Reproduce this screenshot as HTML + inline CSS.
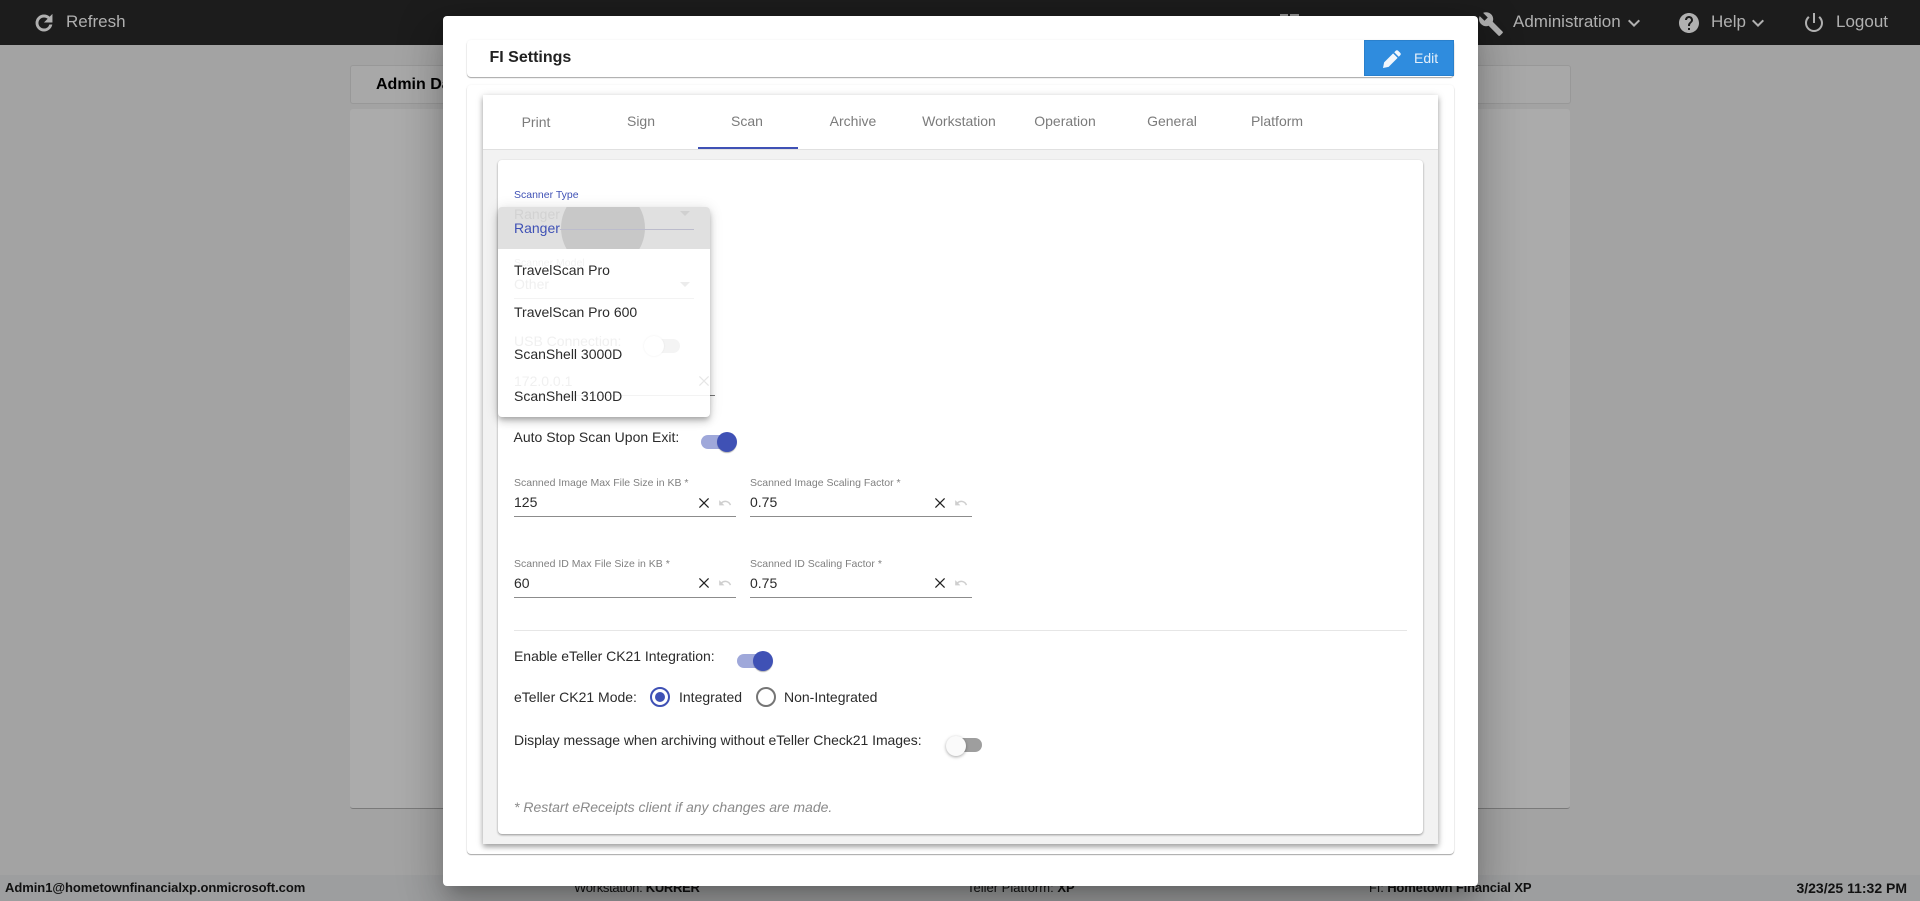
<!DOCTYPE html>
<html lang="en"><head><meta charset="utf-8"><title>FI Settings</title>
<style>
html,body{margin:0;padding:0;width:1920px;height:901px;overflow:hidden;background:#a3a3a3;font-family:"Liberation Sans",Arial,sans-serif}
div,span,svg{position:absolute}
.t{white-space:nowrap;line-height:20px;height:20px}
.nav{color:#b0b0b0;font-size:17px}
.tab{color:#7b7b7b;font-size:14px;width:106px;text-align:center}
.lab{color:#808080;font-size:10.5px}
.val{color:#2b2b2b;font-size:14px}
.it{color:#2b2b2b;font-size:14px}
.fa{color:#ececec;font-size:14px}
.ft{color:#111;font-size:13px}
b{font-weight:700}
.ul{height:1px;background:#8c8c8c}
.x{stroke:#222;stroke-width:1.25;fill:none}
</style></head><body>
<!-- header -->
<div style="left:0;top:0;width:1920px;height:45px;background:#1c1c1c"></div>
<svg style="left:32px;top:11px" width="24" height="24" viewBox="0 0 24 24" fill="#b0b0b0" stroke="#b0b0b0" stroke-width=".9"><path d="M17.65 6.35C16.2 4.9 14.21 4 12 4c-4.42 0-7.99 3.58-7.99 8s3.57 8 7.99 8c3.73 0 6.84-2.55 7.73-6h-2.08c-.82 2.33-3.04 4-5.65 4-3.31 0-6-2.69-6-6s2.69-6 6-6c1.66 0 3.14.69 4.22 1.78L13 11h7V4l-2.35 2.35z"/></svg>
<div class="t nav" style="left:66px;top:12px">Refresh</div>
<div style="left:1280px;top:14px;width:8px;height:3px;background:#8f8f8f"></div>
<div style="left:1290px;top:14px;width:9px;height:3px;background:#8f8f8f"></div>
<svg style="left:1478px;top:11px" width="26" height="26" viewBox="0 0 24 24" fill="#b0b0b0"><path d="M22.7 19l-9.1-9.1c.9-2.3.4-5-1.5-6.9-2-2-5-2.4-7.4-1.3L9 6 6 9 1.6 4.7C.4 7.1.9 10.1 2.9 12.1c1.9 1.9 4.6 2.4 6.9 1.5l9.1 9.1c.4.4 1 .4 1.4 0l2.3-2.3c.5-.4.5-1.1.1-1.4z"/></svg>
<div class="t nav" style="left:1513px;top:12px">Administration</div>
<svg style="left:1622px;top:11px" width="24" height="24" viewBox="0 0 24 24" fill="#b0b0b0"><path d="M7.41 8.59L12 13.17l4.59-4.58L18 10l-6 6-6-6z"/></svg>
<svg style="left:1677px;top:11px" width="24" height="24" viewBox="0 0 24 24" fill="#b0b0b0"><path d="M12 2C6.48 2 2 6.48 2 12s4.48 10 10 10 10-4.48 10-10S17.52 2 12 2zm1 17h-2v-2h2v2zm2.07-7.75l-.9.92C13.45 12.9 13 13.5 13 15h-2v-.5c0-1.1.45-2.1 1.17-2.83l1.24-1.26c.37-.36.59-.86.59-1.41 0-1.1-.9-2-2-2s-2 .9-2 2H8c0-2.21 1.79-4 4-4s4 1.79 4 4c0 .88-.36 1.68-.93 2.25z"/></svg>
<div class="t nav" style="left:1711px;top:12px">Help</div>
<svg style="left:1746px;top:11px" width="24" height="24" viewBox="0 0 24 24" fill="#b0b0b0"><path d="M7.41 8.59L12 13.17l4.59-4.58L18 10l-6 6-6-6z"/></svg>
<svg style="left:1802px;top:11px" width="24" height="24" viewBox="0 0 24 24" fill="#b0b0b0"><path d="M13 2h-2v10h2V2zm4.83 3.17l-1.42 1.42C17.99 7.86 19 9.81 19 12c0 3.87-3.13 7-7 7s-7-3.13-7-7c0-2.19 1.01-4.14 2.58-5.42L6.17 5.17C4.23 6.82 3 9.26 3 12c0 4.97 4.03 9 9 9s9-4.03 9-9c0-2.74-1.23-5.18-3.17-6.83z"/></svg>
<div class="t nav" style="left:1836px;top:12px">Logout</div>

<!-- background page -->
<div style="left:350px;top:65px;width:1219px;height:37px;background:#a8a8a8;border:1px solid #989898;border-radius:3px"></div>
<div class="t" style="left:376px;top:75px;font-size:16px;font-weight:700;color:#000">Admin Dashboard</div>
<div style="left:350px;top:109px;width:1220px;height:699px;background:#ababab;border-bottom:1px solid #7a7a7a;border-radius:3px"></div>

<!-- footer -->
<div style="left:0;top:875px;width:1920px;height:26px;background:#9d9e9f"></div>
<div class="t ft" style="left:5px;top:878px;font-weight:700;letter-spacing:-.05px">Admin1@hometownfinancialxp.onmicrosoft.com</div>
<div class="t ft" style="left:574px;top:878px;letter-spacing:-.3px">Workstation: <b>KURRER</b></div>
<div class="t ft" style="left:967px;top:878px">Teller Platform: <b>XP</b></div>
<div class="t ft" style="left:1369px;top:878px;letter-spacing:-.15px">FI: <b>Hometown Financial XP</b></div>
<div class="t ft" style="right:13px;top:878px;font-size:14px;font-weight:700">3/23/25 11:32 PM</div>

<!-- modal -->
<div style="left:443px;top:16px;width:1035px;height:870px;background:#fff;border-radius:4px;box-shadow:0 11px 15px -7px rgba(0,0,0,.2),0 24px 38px 3px rgba(0,0,0,.14),0 9px 46px 8px rgba(0,0,0,.12)"></div>

<div style="left:467px;top:40px;width:987px;height:37px;background:#fff;border-radius:4px;box-shadow:0 1px 1px rgba(0,0,0,.35),0 0 2px rgba(0,0,0,.06)"></div>
<div class="t" style="left:489.5px;top:48px;font-size:16px;font-weight:700;color:#222">FI Settings</div>
<div style="left:1364px;top:40px;width:90px;height:36px;background:#2f8cde;box-sizing:border-box;border:1px solid #2a80cc"></div>
<svg style="left:1383px;top:50px" width="18" height="18" viewBox="0 0 24 24" fill="#f2f7fc"><path d="M0 24L1.5 16.5 13.5 4.5 19.5 10.5 7.5 22.5zM15 3l2-2c1-1 2.2-1 3.2 0l2.8 2.8c1 1 1 2.2 0 3.2l-2 2z"/></svg>
<div class="t" style="left:1414px;top:48px;font-size:14px;color:#e4eff9">Edit</div>

<div style="left:467px;top:85px;width:987px;height:769px;background:#fff;border-radius:4px;box-shadow:0 1px 1px rgba(0,0,0,.35),0 0 2px rgba(0,0,0,.06)"></div>
<div style="left:483px;top:95px;width:955px;height:749px;background:#f2f2f2;box-shadow:0 3px 5px rgba(0,0,0,.3),0 1px 8px rgba(0,0,0,.14)"></div>
<div style="left:483px;top:95px;width:955px;height:55px;background:#fff;border-bottom:1px solid #e0e0e0;box-sizing:border-box"></div>

<div class="t tab" style="left:483px;top:112px">Print</div>
<div class="t tab" style="left:588px;top:111px">Sign</div>
<div class="t tab" style="left:694px;top:111px">Scan</div>
<div class="t tab" style="left:800px;top:111px">Archive</div>
<div class="t tab" style="left:906px;top:111px">Workstation</div>
<div class="t tab" style="left:1012px;top:111px">Operation</div>
<div class="t tab" style="left:1119px;top:111px">General</div>
<div class="t tab" style="left:1224px;top:111px">Platform</div>
<div style="left:698px;top:147px;width:100px;height:2px;background:#3f51b5"></div>

<div style="left:498px;top:160px;width:925px;height:674px;background:#fff;border-radius:4px;box-shadow:0 1px 2px rgba(0,0,0,.4)"></div>
<div class="t" style="left:514px;top:184.5px;font-size:10.5px;color:#3f51b5">Scanner Type</div>

<!-- dark tail of IP field -->
<div style="left:700px;top:395px;width:15px;height:1px;background:#777"></div>

<!-- dropdown -->
<div style="left:498px;top:207px;width:212px;height:210px;background:#fff;border-radius:4px;box-shadow:0 3px 5px -1px rgba(0,0,0,.2),0 5px 8px rgba(0,0,0,.14),0 1px 14px rgba(0,0,0,.12)"></div>
<div style="left:498px;top:207px;width:212px;height:42px;background:#e0e0e0;border-radius:4px 4px 0 0;overflow:hidden">
  <div style="left:63px;top:-21px;width:84px;height:84px;border-radius:50%;background:#c8c8c8"></div>
  <div style="left:62px;top:22px;width:134px;height:1px;background:#bcbccc"></div>
</div>
<div class="t" style="left:514px;top:204px;font-size:14px;color:#d2d2d2">Ranger</div>
<svg style="left:677px;top:210px" width="16" height="8" viewBox="0 0 16 8" fill="#d0d0d0"><path d="M3 1h10L8 6z"/></svg>
<div class="t it" style="left:514px;top:218px;color:#3f51b5">Ranger</div>
<div class="t fa" style="left:514px;top:253px;font-size:10.5px;color:#f3f3f3">Scanner Model</div>
<div class="t it" style="left:514px;top:260px">TravelScan Pro</div>
<div class="t fa" style="left:514px;top:274px;color:#f0f0f0">Other</div>
<svg style="left:677px;top:281px" width="16" height="8" viewBox="0 0 16 8" fill="#ececec"><path d="M3 1h10L8 6z"/></svg>
<div style="left:514px;top:298px;width:180px;height:1px;background:#f3f3f3"></div>
<div class="t it" style="left:514px;top:302px">TravelScan Pro 600</div>
<div class="t fa" style="left:514px;top:331px;color:#f0f0f0">USB Connection:</div>
<div style="left:651px;top:339px;width:29px;height:14px;border-radius:7px;background:#f4f4f4"></div>
<div style="left:644px;top:336px;width:20px;height:20px;border-radius:50%;background:#fff;box-shadow:0 0 2px rgba(0,0,0,.07)"></div>
<div class="t it" style="left:514px;top:344px">ScanShell 3000D</div>
<div class="t fa" style="left:514px;top:371px;color:#f0f0f0">172.0.0.1</div>
<svg style="left:696px;top:373px" width="16" height="16" viewBox="0 0 16 16"><path d="M3.4 3.4l9.2 9.2M12.6 3.4l-9.2 9.2" stroke="#e6e6e6" stroke-width="1.2" fill="none"/></svg>
<div style="left:514px;top:395px;width:196px;height:1px;background:#f3f3f3"></div>
<div class="t it" style="left:514px;top:386px">ScanShell 3100D</div>

<!-- toggle 1 -->
<div class="t val" style="left:513.5px;top:427px">Auto Stop Scan Upon Exit:</div>
<div style="left:701px;top:435px;width:34px;height:14px;border-radius:7px;background:#9fa8da"></div>
<div style="left:717px;top:432px;width:20px;height:20px;border-radius:50%;background:#3f51b5;box-shadow:0 2px 1px -1px rgba(0,0,0,.2),0 1px 1px rgba(0,0,0,.14)"></div>

<!-- fields -->
<div class="t lab" style="left:514px;top:472.5px">Scanned Image Max File Size in KB *</div>
<div class="t val" style="left:514px;top:492px">125</div>
<svg style="left:696px;top:495px" width="16" height="16" viewBox="0 0 16 16"><path class="x" d="M3.4 3.4l9.2 9.2M12.6 3.4l-9.2 9.2"/></svg>
<svg style="left:718px;top:496px" width="14" height="14" viewBox="0 0 24 24" fill="#cfcfcf"><path d="M12.5 8c-2.65 0-5.05.99-6.9 2.6L2 7v9h9l-3.62-3.62c1.39-1.16 3.16-1.88 5.12-1.88 3.54 0 6.55 2.31 7.6 5.5l2.37-.78C21.08 11.03 17.15 8 12.5 8z"/></svg>
<div class="ul" style="left:514px;top:516px;width:222px"></div>

<div class="t lab" style="left:750px;top:472.5px">Scanned Image Scaling Factor *</div>
<div class="t val" style="left:750px;top:492px">0.75</div>
<svg style="left:932px;top:495px" width="16" height="16" viewBox="0 0 16 16"><path class="x" d="M3.4 3.4l9.2 9.2M12.6 3.4l-9.2 9.2"/></svg>
<svg style="left:954px;top:496px" width="14" height="14" viewBox="0 0 24 24" fill="#cfcfcf"><path d="M12.5 8c-2.65 0-5.05.99-6.9 2.6L2 7v9h9l-3.62-3.62c1.39-1.16 3.16-1.88 5.12-1.88 3.54 0 6.55 2.31 7.6 5.5l2.37-.78C21.08 11.03 17.15 8 12.5 8z"/></svg>
<div class="ul" style="left:750px;top:516px;width:222px"></div>

<div class="t lab" style="left:514px;top:553.5px">Scanned ID Max File Size in KB *</div>
<div class="t val" style="left:514px;top:573px">60</div>
<svg style="left:696px;top:575px" width="16" height="16" viewBox="0 0 16 16"><path class="x" d="M3.4 3.4l9.2 9.2M12.6 3.4l-9.2 9.2"/></svg>
<svg style="left:718px;top:576px" width="14" height="14" viewBox="0 0 24 24" fill="#cfcfcf"><path d="M12.5 8c-2.65 0-5.05.99-6.9 2.6L2 7v9h9l-3.62-3.62c1.39-1.16 3.16-1.88 5.12-1.88 3.54 0 6.55 2.31 7.6 5.5l2.37-.78C21.08 11.03 17.15 8 12.5 8z"/></svg>
<div class="ul" style="left:514px;top:597px;width:222px"></div>

<div class="t lab" style="left:750px;top:553.5px">Scanned ID Scaling Factor *</div>
<div class="t val" style="left:750px;top:573px">0.75</div>
<svg style="left:932px;top:575px" width="16" height="16" viewBox="0 0 16 16"><path class="x" d="M3.4 3.4l9.2 9.2M12.6 3.4l-9.2 9.2"/></svg>
<svg style="left:954px;top:576px" width="14" height="14" viewBox="0 0 24 24" fill="#cfcfcf"><path d="M12.5 8c-2.65 0-5.05.99-6.9 2.6L2 7v9h9l-3.62-3.62c1.39-1.16 3.16-1.88 5.12-1.88 3.54 0 6.55 2.31 7.6 5.5l2.37-.78C21.08 11.03 17.15 8 12.5 8z"/></svg>
<div class="ul" style="left:750px;top:597px;width:222px"></div>

<div style="left:514px;top:630px;width:893px;height:1px;background:#e6e6e6"></div>

<div class="t val" style="left:514px;top:646px;letter-spacing:-.03px">Enable eTeller CK21 Integration:</div>
<div style="left:737px;top:654px;width:34px;height:14px;border-radius:7px;background:#9fa8da"></div>
<div style="left:753px;top:651px;width:20px;height:20px;border-radius:50%;background:#3f51b5;box-shadow:0 2px 1px -1px rgba(0,0,0,.2),0 1px 1px rgba(0,0,0,.14)"></div>

<div class="t val" style="left:514px;top:687px">eTeller CK21 Mode:</div>
<div style="left:650px;top:687px;width:20px;height:20px;box-sizing:border-box;border:2px solid #3f51b5;border-radius:50%"></div>
<div style="left:655px;top:692px;width:10px;height:10px;border-radius:50%;background:#3f51b5"></div>
<div class="t val" style="left:679px;top:687px">Integrated</div>
<div style="left:756px;top:687px;width:20px;height:20px;box-sizing:border-box;border:2px solid #757575;border-radius:50%"></div>
<div class="t val" style="left:784px;top:687px">Non-Integrated</div>

<div class="t val" style="left:514px;top:730px;letter-spacing:-.04px">Display message when archiving without eTeller Check21 Images:</div>
<div style="left:948px;top:738px;width:34px;height:14px;border-radius:7px;background:#9e9e9e"></div>
<div style="left:946px;top:736px;width:20px;height:20px;border-radius:50%;background:#fafafa;box-shadow:0 1px 3px rgba(0,0,0,.35)"></div>

<div class="t" style="left:514px;top:797px;font-size:14px;font-style:italic;color:#8a8a8a">* Restart eReceipts client if any changes are made.</div>
</body></html>
